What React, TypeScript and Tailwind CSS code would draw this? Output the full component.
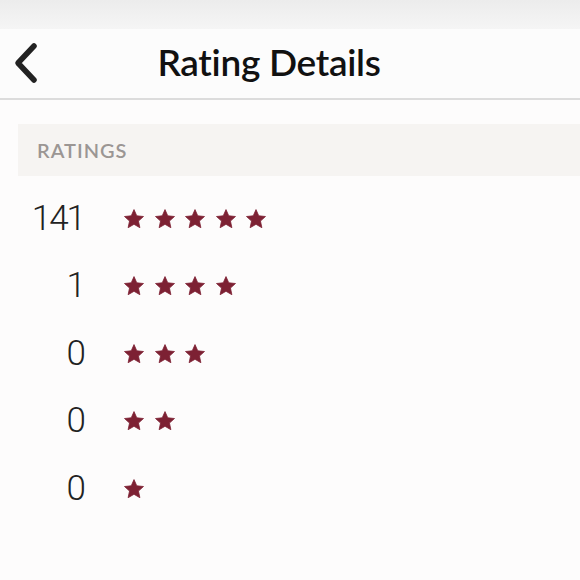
import React from 'react';

const rows = [
  { count: 141, stars: 5 },
  { count: 1, stars: 4 },
  { count: 0, stars: 3 },
  { count: 0, stars: 2 },
  { count: 0, stars: 1 },
];

// five-point star, fatter inner radius than the usual glyph
const starPoints = Array.from({ length: 10 })
  .map((_, i) => {
    const r = i % 2 === 0 ? 10 : 4.7;
    const a = (Math.PI / 5) * i - Math.PI / 2;
    return `${(10 + r * Math.cos(a)).toFixed(2)},${(10.6 + r * Math.sin(a)).toFixed(2)}`;
  })
  .join(' ');

const Star = () => (
  <svg width="20" height="20" viewBox="0 0 20 20" className="shrink-0">
    <polygon points={starPoints} fill="#7d2133" strokeLinejoin="round" stroke="#7d2133" strokeWidth="0.8" />
  </svg>
);

export default function App() {
  return (
    <div
      className="w-[580px] h-[580px] overflow-hidden bg-[#fdfcfc]"
      style={{ fontFamily: 'Lato, "Noto Sans", sans-serif' }}
    >
      <div className="h-[29px] bg-gradient-to-b from-[#ececec] to-[#f5f5f5]" />

      {/* header */}
      <div className="relative h-[71px] flex items-center justify-center bg-[#fcfcfc] border-b-2 border-[#dcdcdc]">
        <button className="absolute left-[12px] top-[12px] p-0">
          <svg width="28" height="44" viewBox="0 0 28 44">
            <path
              d="M22 5L6 22l16 17"
              fill="none"
              stroke="#222"
              strokeWidth="5.5"
              strokeLinecap="round"
              strokeLinejoin="round"
            />
          </svg>
        </button>
        <h1 className="mr-[42px] pb-[4px] text-[37px] font-semibold text-[#111] tracking-[-0.3px]">Rating Details</h1>
      </div>

      {/* section label */}
      <div className="mt-[24px] ml-[18px] h-[52px] flex items-center pl-[19px] bg-[#f6f4f2]">
        <span className="text-[20px] font-semibold tracking-[1px] text-[#9b9694]">RATINGS</span>
      </div>

      {/* rows */}
      <div className="pt-[9px] pl-[18px]">
        {rows.map((r) => (
          <div key={r.stars} className="h-[67.5px] flex items-center">
            <span
              className="w-[66px] text-right text-[35px] text-[#222] tracking-[-2px]"
              style={{ fontFamily: 'Roboto, sans-serif', fontWeight: 350 }}
            >
              {r.count}
            </span>
            <div className="ml-[40px] flex items-center gap-[10.5px]">
              {Array.from({ length: r.stars }).map((_, i) => (
                <Star key={i} />
              ))}
            </div>
          </div>
        ))}
      </div>
    </div>
  );
}
